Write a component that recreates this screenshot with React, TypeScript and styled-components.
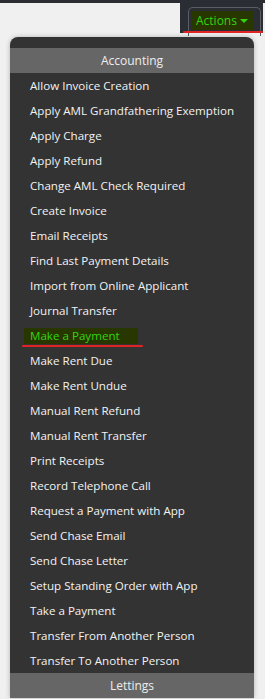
import styled, { createGlobalStyle } from 'styled-components';

const ITEMS = [
  'Allow Invoice Creation',
  'Apply AML Grandfathering Exemption',
  'Apply Charge',
  'Apply Refund',
  'Change AML Check Required',
  'Create Invoice',
  'Email Receipts',
  'Find Last Payment Details',
  'Import from Online Applicant',
  'Journal Transfer',
  'Make a Payment',
  'Make Rent Due',
  'Make Rent Undue',
  'Manual Rent Refund',
  'Manual Rent Transfer',
  'Print Receipts',
  'Record Telephone Call',
  'Request a Payment with App',
  'Send Chase Email',
  'Send Chase Letter',
  'Setup Standing Order with App',
  'Take a Payment',
  'Transfer From Another Person',
  'Transfer To Another Person',
];

const ACTIVE = 'Make a Payment';

export default function App() {
  return (
    <>
      <GlobalStyle />
      <Page>
        <TopBar>
          <TopFill />
          <ActionsPanel>
            <ActionsFrame>
              <ActionsButton>
                Actions <Caret />
              </ActionsButton>
            </ActionsFrame>
            <Mark $left={3} $width={80} $top={31} />
          </ActionsPanel>
          <TopEdge />
        </TopBar>

        <Menu>
          <GroupHeader>Accounting</GroupHeader>
          <List>
            {ITEMS.map((item) => (
              <Row key={item}>
                <Label $active={item === ACTIVE}>
                  {item}
                  {item === ACTIVE && <Mark $left={-2} $width={121} $top={17} />}
                </Label>
              </Row>
            ))}
          </List>
          <GroupHeader>Lettings</GroupHeader>
        </Menu>
      </Page>
    </>
  );
}

const GlobalStyle = createGlobalStyle`
  html, body {
    margin: 0;
    padding: 0;
    background: #f0f0f0;
    font-family: 'Open Sans', 'Noto Sans', sans-serif;
    font-size: 11.6px;
    font-weight: 500;
    overflow: hidden;
  }
`;

const Page = styled.div({
  width: '265px',
  height: '699px',
  overflow: 'hidden',
});

const TopBar = styled.div({
  display: 'flex',
  height: '33px',
});

const TopFill = styled.div({
  flex: 1,
  borderTop: '3px solid #2b2d33',
});

const TopEdge = styled.div({
  width: '2px',
  borderTop: '3px solid #2b2d33',
});

const ActionsPanel = styled.div({
  position: 'relative',
  width: '83px',
  background: '#2b2d35',
  display: 'flex',
  alignItems: 'flex-start',
  paddingLeft: '8px',
  paddingTop: '7px',
  boxSizing: 'border-box',
});

const ActionsFrame = styled.div({
  border: '1px solid #5a5d66',
  borderBottom: 'none',
  borderRadius: '5px 5px 0 0',
  padding: '3px 7px 6px 2px',
});

const ActionsButton = styled.div({
  background: '#283600',
  color: '#33d411',
  fontSize: '12px',
  height: '19px',
  lineHeight: '19px',
  padding: '0 5px 0 5px',
  display: 'flex',
  alignItems: 'center',
  gap: '3px',
  whiteSpace: 'nowrap',
});

const Caret = styled.span({
  width: 0,
  height: 0,
  borderLeft: '4px solid transparent',
  borderRight: '4px solid transparent',
  borderTop: '4px solid #33d411',
  marginTop: '1px',
});

const Mark = styled.div<{ $left: number; $width: number; $top: number }>`
  position: absolute;
  left: ${(p) => p.$left}px;
  top: ${(p) => p.$top}px;
  width: ${(p) => p.$width}px;
  height: 2px;
  background: #e02424;
  border-radius: 1px;
`;

const Menu = styled.div({
  marginTop: '4px',
  marginLeft: '10px',
  width: '244px',
  background: '#333333',
  borderRadius: '8px 8px 0 0',
  boxShadow: '0 0 5px rgba(0, 0, 0, 0.25)',
  paddingTop: '11px',
});

const GroupHeader = styled.div({
  height: '25px',
  lineHeight: '25px',
  background: '#666666',
  color: '#eeeeee',
  fontSize: '12px',
  textAlign: 'center',
});

const List = styled.div({
  display: 'flex',
  flexDirection: 'column',
});

const Row = styled.div({
  height: '25px',
  display: 'flex',
  alignItems: 'center',
  paddingLeft: '14px',
});

const Label = styled.span<{ $active: boolean }>`
  position: relative;
  display: inline-block;
  height: 16px;
  line-height: 16px;
  padding: 0 ${(p) => (p.$active ? '18px' : '6px')} 0 6px;
  color: ${(p) => (p.$active ? '#33d411' : '#f2f2f2')};
  background: ${(p) => (p.$active ? '#283600' : 'transparent')};
  white-space: nowrap;
`;
